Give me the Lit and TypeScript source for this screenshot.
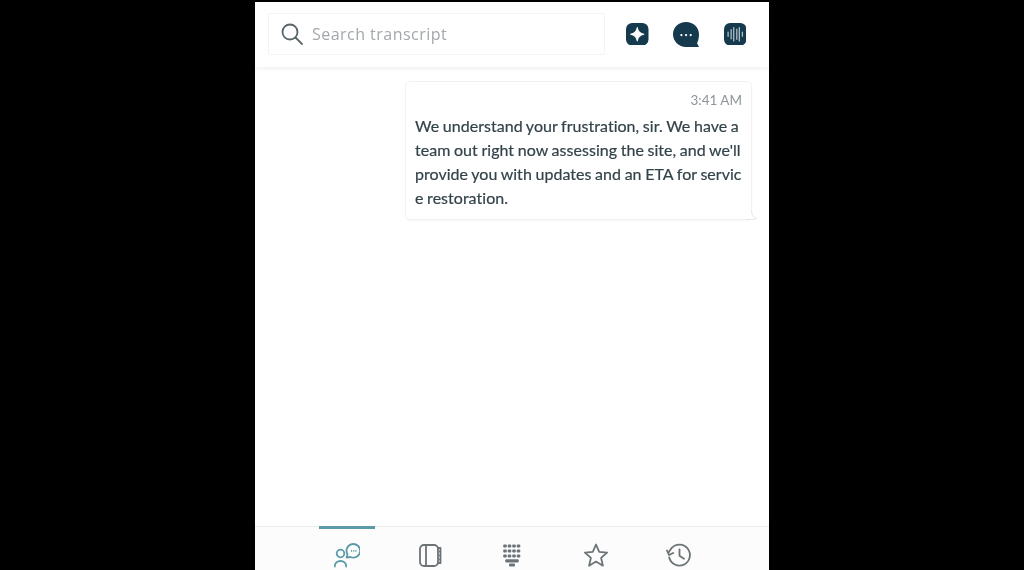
import { LitElement, html, css, svg } from 'lit';
import { customElement } from 'lit/decorators.js';

const tabIcons = [
  svg`<circle cx="6.500" cy="11.500" r="3.800" /><path d="M.8 24.500c0-3.500 2.500-5.500 5.700-5.500s5.700 2 5.700 5.500" /><path d="M12.500 15.500l1-3.200A6.800 6.800 0 1 1 16.500 15z" /><path d="M17 8.800h5.500" stroke-dasharray="1.100 1.100" stroke-linecap="butt" />`,
  svg`<rect x="3" y="3" width="18" height="21" rx="4" /><path d="M9 3v21" /><path d="M21 6h2.500v15H21" /><path d="M23 9.500v.1M23 13.500v.1M23 17.500v.1" stroke-width="2" />`,
  svg`<g fill="currentColor" stroke="none">${[4, 9, 14].flatMap((y) =>
    [5, 9.500, 14, 18.500].map((x) => svg`<rect x=${x - 1.800} y=${y - 1.600} width="3.600" height="3.200" rx="1" />`)
  )}<rect x="5.300" y="17.300" width="13.400" height="3.200" rx="1" /><rect x="9" y="21.500" width="6" height="3" rx="1.200" /></g>`,
  svg`<path d="M13 2.500l3.200 7.300 7.900.8-6 5.300 1.800 7.800-6.900-4.100-6.900 4.100 1.800-7.800-6-5.300 7.900-.8z" />`,
  svg`<path d="M3.200 15.500A10.500 10.500 0 1 0 5.500 6.200L2.500 10.500" /><path d="M1 8.500l2 4.500 4.200-2" /><path d="M13.500 7.500v6.300l4.500 3" />`,
];

@customElement('app-root')
export class AppRoot extends LitElement {
  static styles = css`
    :host {
      display: block;
      height: 570px;
      background: #000;
      overflow: hidden;
    }

    .phone {
      width: 514px;
      height: 568px;
      margin: 2px 0 0 255px;
      display: flex;
      flex-direction: column;
      background: #fff;
      font-family: Lato, sans-serif;
      color: #32434a;
      filter: blur(0.5px);
    }

    .top {
      height: 65px;
      flex: none;
      box-sizing: border-box;
      display: flex;
      align-items: flex-start;
      padding: 11px 0 0 13px;
      background: #fff;
      box-shadow: 0 2px 4px rgba(0, 0, 0, 0.06);
      position: relative;
    }

    .search {
      width: 337px;
      height: 42px;
      box-sizing: border-box;
      display: flex;
      align-items: center;
      gap: 8px;
      padding-left: 12px;
      border: 1px solid #f3f4f4;
      border-radius: 2px;
      font-family: 'Open Sans', sans-serif;
      font-size: 16px;
      letter-spacing: 0.47px;
      color: #a3a8aa;
    }

    .search svg {
      width: 23px;
      height: 23px;
      flex: none;
    }

    .actions {
      display: flex;
      align-items: center;
      gap: 24.500px;
      margin-left: 21px;
      height: 42px;
    }

    .actions svg {
      width: 22.500px;
      height: 22.500px;
      display: block;
    }

    .actions svg.chat-icon {
      width: 26px;
      height: 25px;
    }

    .chat {
      flex: 1;
      min-height: 0;
      display: flex;
      justify-content: flex-end;
      align-items: flex-start;
      padding: 14px 17px 0 0;
    }

    .bubble {
      position: relative;
      width: 347px;
      height: 139px;
      box-sizing: border-box;
      padding: 9px 9px 0 9px;
      border: 1px solid #f1f2f2;
      border-radius: 5px;
      box-shadow: 0 1px 2px rgba(0, 0, 0, 0.04);
    }

    .tail {
      position: absolute;
      right: -7px;
      bottom: -1px;
      width: 14px;
      height: 10px;
    }

    .time {
      text-align: right;
      font-size: 13.500px;
      line-height: 18px;
      color: #8d9598;
    }

    .text {
      margin-top: 5px;
      font-size: 16px;
      line-height: 24px;
      letter-spacing: 0.03px;
      word-spacing: -0.5px;
      font-variant-ligatures: none;
      -webkit-text-stroke: 0.2px currentColor;
      white-space: nowrap;
    }

    .tabs {
      height: 43px;
      flex: none;
      display: flex;
      justify-content: center;
      padding-left: 2px;
      border-top: 1px solid #eceded;
      background: #fcfcfc;
    }

    .tab {
      position: relative;
      width: 83px;
      display: flex;
      justify-content: center;
      padding-top: 15px;
      color: #6c7376;
    }

    .tab svg {
      width: 26px;
      height: 26px;
      flex: none;
    }

    .tab.active {
      color: #5b9aa8;
    }

    .tab.active::before {
      content: '';
      position: absolute;
      top: -1px;
      left: 13px;
      width: 56px;
      height: 3px;
      background: #5b9aa8;
    }
  `;

  render() {
    return html`
      <div class="phone">
        <div class="top">
          <div class="search">
            <svg viewBox="0 0 23 23" fill="none" stroke="#5a6569" stroke-width="1.800" stroke-linecap="round">
              <circle cx="9" cy="9" r="7.500" />
              <path d="M14.500 14.500l6.500 6.500" />
            </svg>
            Search transcript
          </div>
          <div class="actions">
            <svg viewBox="1 1 22 22">
              <rect x="1" y="1" width="22" height="22" rx="6" fill="#15394d" />
              <path d="M12 5.500c.7 4 2.500 5.800 6.500 6.500-4 .7-5.800 2.500-6.500 6.500-.7-4-2.500-5.800-6.500-6.500 4-.7 5.800-2.500 6.500-6.500z" fill="#fff" stroke="#fff" stroke-width="1" stroke-linejoin="round" />
            </svg>
            <svg class="chat-icon" viewBox="0 0 24 23">
              <path d="M12 0C5.300 0 0 4.900 0 11.300 0 17.700 5.300 23 12 23h12l-1.800-3.400C23.300 17.500 24 14.500 24 11.300 24 4.900 18.700 0 12 0z" fill="#15394d" />
              <path d="M7.700 12h.1M12 12h.1M16.300 12h.1" stroke="#fff" stroke-width="2" stroke-linecap="round" />
            </svg>
            <svg viewBox="1 1 22 22">
              <rect x="1" y="1" width="22" height="22" rx="6" fill="#15394d" />
              <path d="M5 10v4M8 7.500v9M10.500 5.500v13M13.500 7v10M16 5.500v13M19 10v4" stroke="#a9bcc5" stroke-width="1.300" stroke-linecap="round" />
            </svg>
          </div>
        </div>
        <div class="chat">
          <div class="bubble">
            <div class="time">3:41 AM</div>
            <div class="text">
              We understand your frustration, sir. We have a<br />
              team out right now assessing the site, and we'll<br />
              provide you with updates and an ETA for servic<br />
              e restoration.
            </div>
            <svg class="tail" viewBox="0 0 14 10">
              <path d="M7 0v1c0 3 2 6 5.500 7.500C10 9.500 6 9.500 2 9.500z" fill="#fff" />
              <path d="M7.500 1c0 3 1.800 6 5 7.500-2.500 1-6.500 1-10.500 1" fill="none" stroke="#e6e8e8" stroke-width="1" />
            </svg>
          </div>
        </div>
        <div class="tabs">
          ${tabIcons.map(
            (icon, i) => html`
              <div class="tab ${i === 0 ? 'active' : ''}">
                <svg viewBox="0 0 26 26" fill="none" stroke="currentColor" stroke-width="1.800" stroke-linecap="round" stroke-linejoin="round">
                  ${icon}
                </svg>
              </div>
            `
          )}
        </div>
      </div>
    `;
  }
}
